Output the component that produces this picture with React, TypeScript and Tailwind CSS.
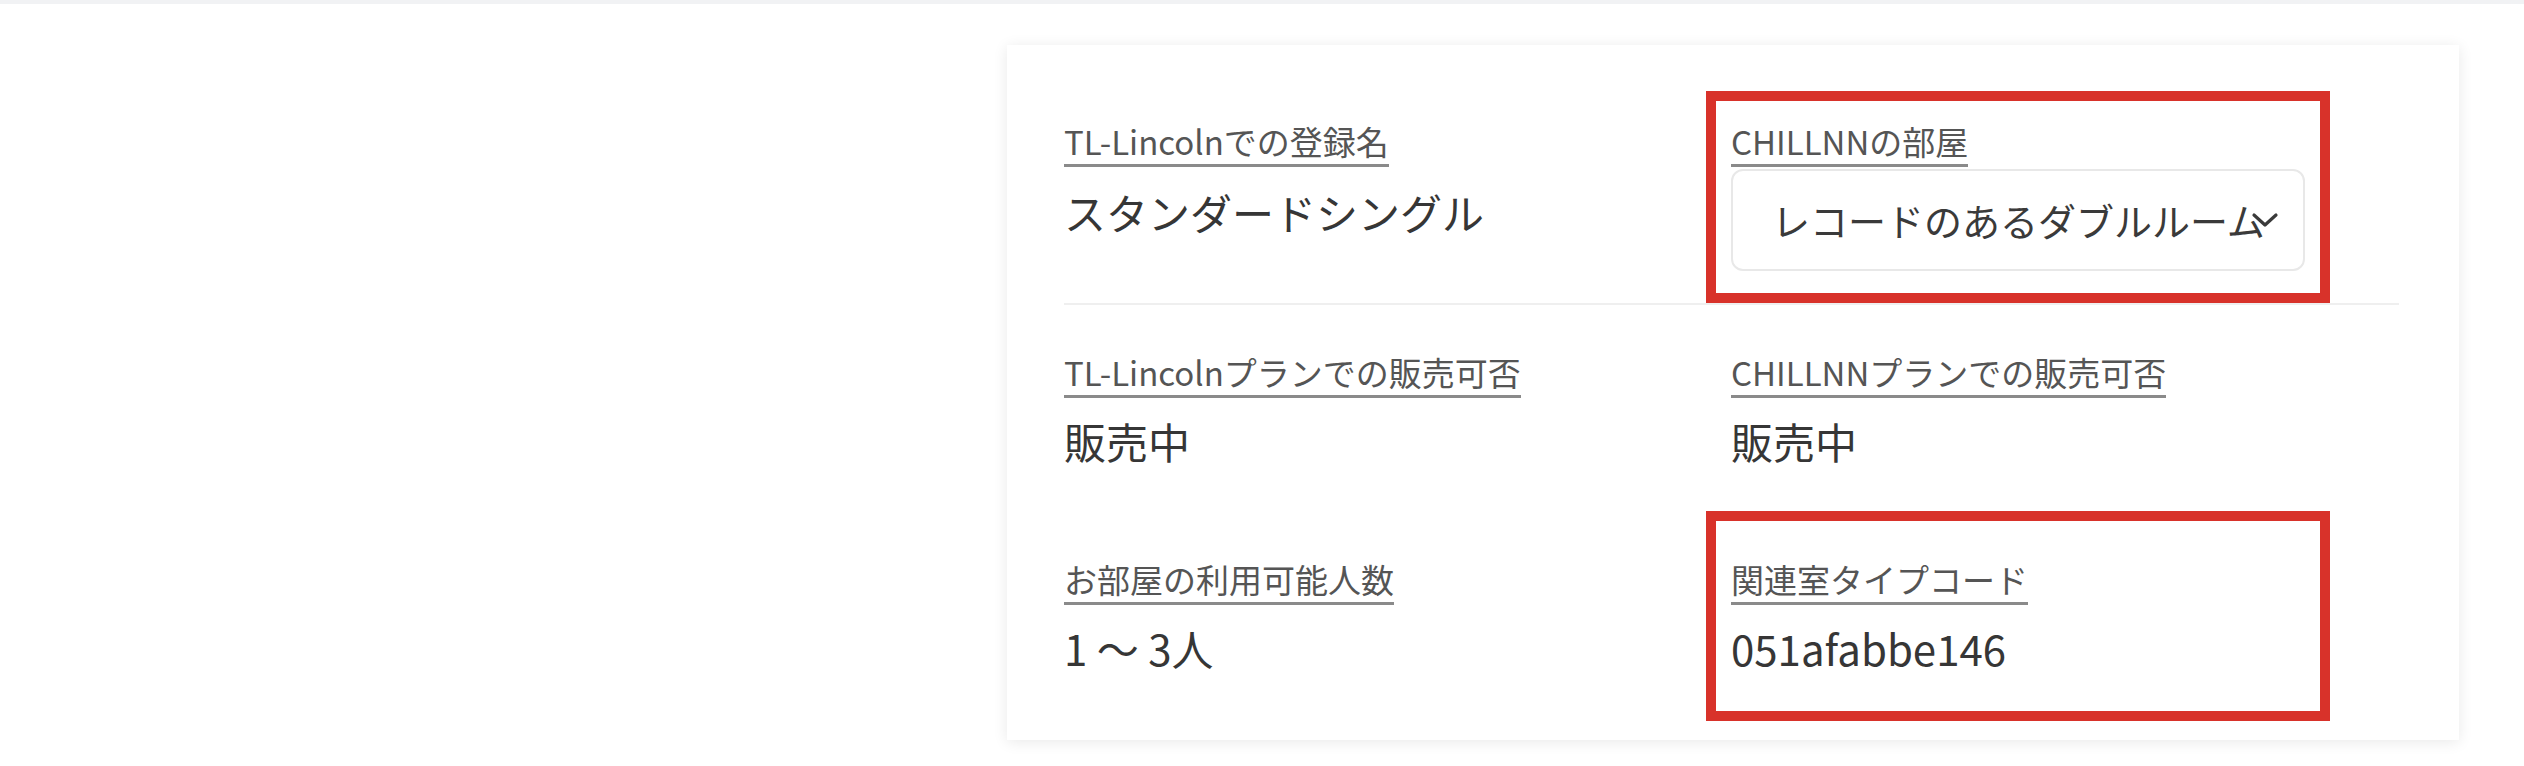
import React from "react";

function Label({ children }: { children: React.ReactNode }) {
  return (
    <span className="inline-block text-[33px] leading-none text-[#555555] pb-[6px] border-b-[3px] border-[#8a8a8a]">
      {children}
    </span>
  );
}

function Value({ children }: { children: React.ReactNode }) {
  return <div className="text-[42px] leading-none text-[#363636] mt-[22px] whitespace-pre">{children}</div>;
}

function ChevronDown() {
  return (
    <svg width="28" height="18" viewBox="0 0 28 18" fill="none" className="absolute right-[24px] top-1/2 -translate-y-1/2">
      <path d="M3 4 L14 14 L25 4" stroke="#3a3a3a" strokeWidth="3.2" strokeLinecap="round" strokeLinejoin="round" />
    </svg>
  );
}

export default function App() {
  return (
    <div className="w-full h-[766px] bg-white border-t-4 border-[#f1f2f4] font-['Noto_Sans_CJK_JP','Noto_Sans',sans-serif] overflow-hidden">
      <div className="flex pl-[1007px] pt-[41px]">
        <div className="w-[1452px] h-[695px] bg-white shadow-[0_2px_14px_rgba(0,0,0,0.09)] pl-[57px] pr-[60px] pt-[46px]">
          {/* row 1 */}
          <div className="grid grid-cols-[642px_624px]">
            <div className="pt-[34px]">
              <Label>TL-Lincolnでの登録名</Label>
              <div className="text-[42px] leading-none text-[#363636] mt-[24px]">スタンダードシングル</div>
            </div>
            <div className="border-[10px] border-[#d8322a] pt-[24px] pb-[22px] px-[15px]">
              <Label>CHILLNNの部屋</Label>
              <div className="relative mt-[2px] h-[102px] border-2 border-[#e8e8e8] rounded-[12px] flex items-center pl-[39px] overflow-hidden">
                <span className="text-[38px] leading-none text-[#3a3a3a] whitespace-nowrap">レコードのあるダブルルーム</span>
                <ChevronDown />
              </div>
            </div>
          </div>
          <div className="h-[2px] bg-[#efefef]" />

          {/* row 2 */}
          <div className="grid grid-cols-[642px_624px] pt-[51px]">
            <div>
              <Label>TL-Lincolnプランでの販売可否</Label>
              <Value>販売中</Value>
            </div>
            <div className="pl-[25px]">
              <Label>CHILLNNプランでの販売可否</Label>
              <Value>販売中</Value>
            </div>
          </div>

          {/* row 3 */}
          <div className="grid grid-cols-[642px_624px] mt-[49px]">
            <div className="pt-[52px]">
              <Label>お部屋の利用可能人数</Label>
              <Value>1 〜 3人</Value>
            </div>
            <div className="border-[10px] border-[#d8322a] pt-[42px] pb-[42px] px-[15px]">
              <Label>関連室タイプコード</Label>
              <Value>051afabbe146</Value>
            </div>
          </div>
        </div>
      </div>
    </div>
  );
}
